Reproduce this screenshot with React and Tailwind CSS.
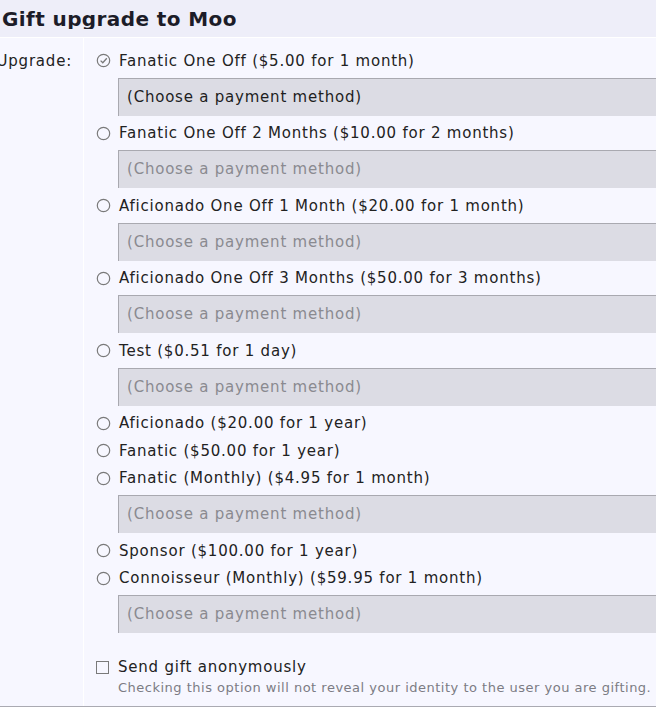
import React from 'react';

const options = [
  { label: 'Fanatic One Off ($5.00 for 1 month)', pay: true, checked: true },
  { label: 'Fanatic One Off 2 Months ($10.00 for 2 months)', pay: true },
  { label: 'Aficionado One Off 1 Month ($20.00 for 1 month)', pay: true },
  { label: 'Aficionado One Off 3 Months ($50.00 for 3 months)', pay: true },
  { label: 'Test ($0.51 for 1 day)', pay: true },
  { label: 'Aficionado ($20.00 for 1 year)' },
  { label: 'Fanatic ($50.00 for 1 year)' },
  { label: 'Fanatic (Monthly) ($4.95 for 1 month)', pay: true },
  { label: 'Sponsor ($100.00 for 1 year)' },
  { label: 'Connoisseur (Monthly) ($59.95 for 1 month)', pay: true },
];

function Radio({ checked }) {
  return (
    <svg width="15" height="15" viewBox="0 0 15 15" className="shrink-0">
      <circle cx="7.5" cy="7.5" r="6.2" fill="none" stroke="#7a7a7a" strokeWidth="1.2" />
      {checked && (
        <path d="M4.6 7.6 L6.8 9.8 L10.8 5.2" fill="none" stroke="#7a7a7a" strokeWidth="1.3" />
      )}
    </svg>
  );
}

export default function App() {
  return (
    <div className="w-[656px] h-[708px] overflow-hidden bg-white font-['DejaVu_Sans',sans-serif] text-[#222]">
      {/* Header */}
      <div className="h-[38px] bg-[#eeeef9] border-b border-white flex items-center">
        <h1 className="w-[236px] overflow-hidden whitespace-nowrap pl-[2px] pt-[1px] text-[20px] font-bold leading-none tracking-[0.4px] text-[#1c1c28]">
          Gift upgrade to Moo
        </h1>
      </div>

      {/* Body */}
      <div className="flex bg-[#f7f7ff] border-b border-[#aaaab2] h-[669px] tracking-[0.78px]">
        <div className="w-[84px] shrink-0 border-r border-white pt-[9px] flex justify-end pr-[11px]">
          <span className="h-[27.5px] flex items-center text-[15px] whitespace-nowrap">Upgrade:</span>
        </div>

        <div className="flex-1 min-w-0 pt-[9px] pl-[12px]">
          {options.map((o) => (
            <div key={o.label}>
              <div className="h-[27.5px] flex items-center gap-[8px] text-[15px] whitespace-nowrap">
                <Radio checked={o.checked} />
                <span>{o.label}</span>
              </div>
              {o.pay && (
                <div className="ml-[22px] mt-[3px] mb-[4px] h-[38px] w-[600px] bg-[#dcdce4] border-t border-l border-[#a9a9b0] flex items-center pl-[8px] text-[15px] whitespace-nowrap">
                  <span className={o.checked ? 'text-[#1e1e1e]' : 'text-[#8a8a90]'}>
                    (Choose a payment method)
                  </span>
                </div>
              )}
            </div>
          ))}

          <div className="mt-[24px]">
            <div className="h-[21px] flex items-center gap-[9px] text-[15px] whitespace-nowrap">
              <span className="w-[13px] h-[13px] border border-[#7a7a7a] bg-[#f7f7ff] shrink-0" />
              <span>Send gift anonymously</span>
            </div>
            <div className="pl-[22px] text-[13px] leading-[20px] tracking-[0.5px] text-[#7c7c84] whitespace-nowrap">
              Checking this option will not reveal your identity to the user you are gifting.
            </div>
          </div>
        </div>
      </div>
    </div>
  );
}
